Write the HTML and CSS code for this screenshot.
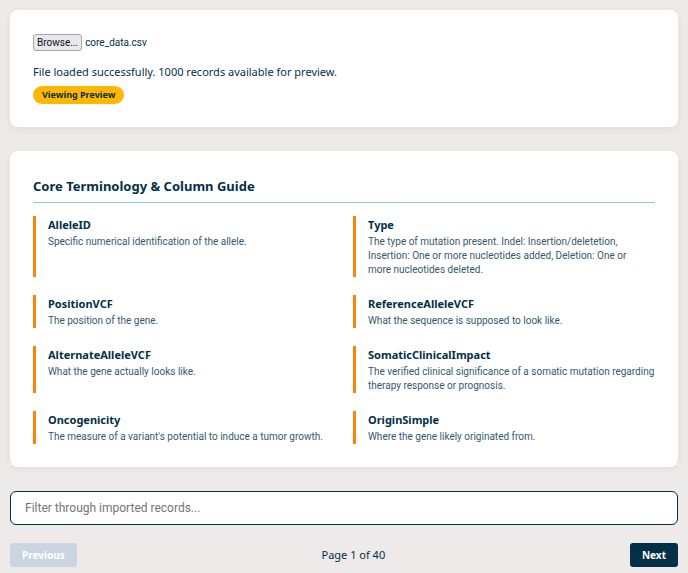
FILE: index.html
```html
<!DOCTYPE html>
<html lang="en">
<head>
  <meta charset="UTF-8">
  <meta name="viewport" content="width=device-width, initial-scale=1.0">
  <title>Core Data Viewer</title>
  <link rel="stylesheet" href="styles.css">
</head>
<body>
  <section class="card">
    <div class="file-picker">
      <input type="file" id="fileInput" class="file-input" accept=".csv">
      <label for="fileInput" class="file-button">Browse...</label>
      <span id="fileName">core_data.csv</span>
    </div>
    <p id="status" class="status">File loaded successfully. 1000 records available for preview.</p>
    <span class="badge">Viewing Preview</span>
  </section>

  <section class="card">
    <h2>Core Terminology &amp; Column Guide</h2>
    <dl class="guide-grid">
      <div class="guide-item">
        <dt>AlleleID</dt>
        <dd>Specific numerical identification of the allele.</dd>
      </div>
      <div class="guide-item">
        <dt>Type</dt>
        <dd>The type of mutation present. Indel: Insertion/deletetion, Insertion: One or more nucleotides added, Deletion: One or more&nbsp;nucleotides deleted.</dd>
      </div>
      <div class="guide-item">
        <dt>PositionVCF</dt>
        <dd>The position of the gene.</dd>
      </div>
      <div class="guide-item">
        <dt>ReferenceAlleleVCF</dt>
        <dd>What the sequence is supposed to look like.</dd>
      </div>
      <div class="guide-item">
        <dt>AlternateAlleleVCF</dt>
        <dd>What the gene actually looks like.</dd>
      </div>
      <div class="guide-item">
        <dt>SomaticClinicalImpact</dt>
        <dd>The verified clinical significance of a somatic mutation regarding therapy response or prognosis.</dd>
      </div>
      <div class="guide-item">
        <dt>Oncogenicity</dt>
        <dd>The measure of a variant's potential to induce a tumor growth.</dd>
      </div>
      <div class="guide-item">
        <dt>OriginSimple</dt>
        <dd>Where the gene likely originated from.</dd>
      </div>
    </dl>
  </section>

  <input type="text" id="filter" class="filter" placeholder="Filter through imported records..." aria-label="Filter records">

  <div class="pagination">
    <button type="button" id="prevBtn" disabled>Previous</button>
    <span id="pageInfo">Page 1 of 40</span>
    <button type="button" id="nextBtn">Next</button>
  </div>
</body>
</html>
```

FILE: styles.css
```css
* {
  box-sizing: border-box;
}

body {
  margin: 0;
  padding: 10px 10px 0;
  font-family: 'Noto Sans', sans-serif;
  font-size: 11px;
  line-height: 18px;
  color: #023047;
  background: #edeae9;
}

.card {
  background: white;
  padding: 23px;
  margin-bottom: 24px;
  border-radius: 8px;
  box-shadow: 0 2px 8px rgba(0, 0, 0, 0.06);
}

/* Upload */
.file-picker {
  display: flex;
  align-items: center;
  gap: 3px;
  height: 19px;
  font-family: Roboto, sans-serif;
  font-size: 10px;
}

.file-input {
  position: absolute;
  width: 1px;
  height: 1px;
  opacity: 0;
}

.file-button {
  padding: 0 3px;
  line-height: 15px;
  color: #111;
  background: #e9e9ed;
  border: 1px solid #a5a5ae;
  border-radius: 3px;
  cursor: pointer;
}

.status {
  margin: 11px 0 5px;
}

.badge {
  display: block;
  width: fit-content;
  padding: 0 9px;
  font-size: 9px;
  font-weight: 700;
  background: #ffb703;
  border-radius: 9px;
}

/* Column guide */
h2 {
  margin: 0 0 13px;
  padding-bottom: 4px;
  font-size: 13px;
  line-height: 24px;
  border-bottom: 1px solid #8ecae6;
}

.guide-grid {
  display: grid;
  grid-template-columns: 1fr 1fr;
  gap: 18px;
  margin: 0;
}

.guide-item {
  padding-left: 12px;
  border-left: 3px solid #fb8500;
}

dt {
  font-weight: 700;
}

dd {
  margin: 1px 0 0;
  font-family: Roboto, sans-serif;
  font-size: 10px;
  line-height: 14px;
  color: #35596c;
}

/* Filter and paging */
.filter {
  display: block;
  width: 100%;
  padding: 7px 14px;
  font-family: Roboto, sans-serif;
  font-size: 12px;
  line-height: 18px;
  color: #023047;
  background: white;
  border: 1px solid #023047;
  border-radius: 6px;
}

.filter::placeholder {
  color: #757575;
}

.pagination {
  display: flex;
  justify-content: space-between;
  align-items: center;
  margin-top: 18px;
}

button {
  padding: 3px 12px;
  font-family: inherit;
  font-size: 10px;
  font-weight: 700;
  line-height: 18px;
  color: white;
  background: #023047;
  border: none;
  border-radius: 3px;
  cursor: pointer;
}

button:disabled {
  background: #cbd5e1;
  cursor: not-allowed;
}
```
